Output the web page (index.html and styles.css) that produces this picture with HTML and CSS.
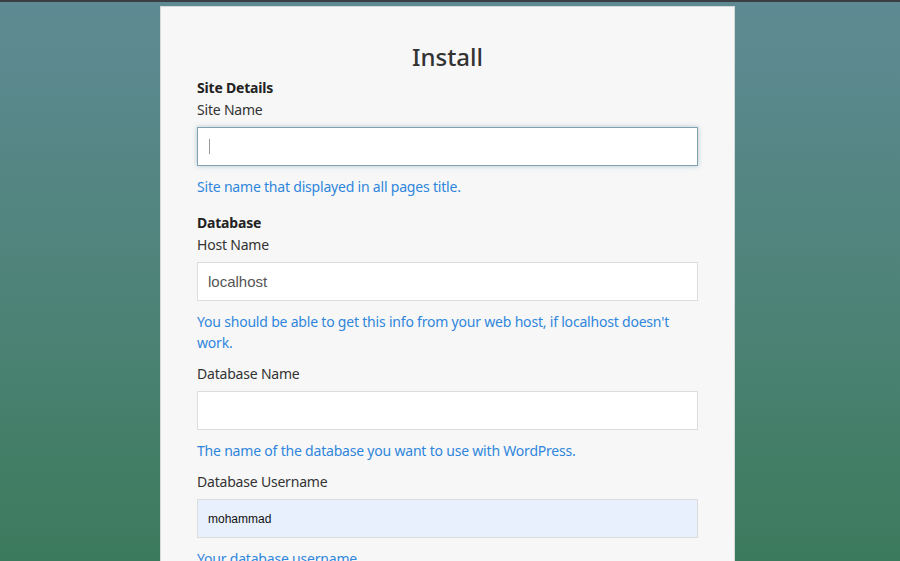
FILE: index.html
```html
<!DOCTYPE html>
<html>
<head>
  <title>Install</title>
  <meta charset="utf-8">
  <meta name="viewport" content="width=device-width, initial-scale=1.0">
  <link rel="stylesheet" href="styles.css">
</head>
<body>
  <div class="topbar"></div>
  <div class="page">
    <div class="card">
      <h1>Install</h1>

      <div class="section-title">Site Details</div>
      <div class="form-group">
        <label class="label" for="siteName">Site Name</label>
        <div class="input-wrap">
          <input type="text" id="siteName" class="input focused" value="">
          <span class="caret"></span>
        </div>
        <div class="help">Site name that displayed in all pages title.</div>
      </div>

      <div class="section-title spaced">Database</div>
      <div class="form-group">
        <label class="label" for="hostName">Host Name</label>
        <input type="text" id="hostName" class="input" value="localhost">
        <div class="help">You should be able to get this info from your web host, if localhost doesn't work.</div>
      </div>

      <div class="form-group">
        <label class="label" for="dbName">Database Name</label>
        <input type="text" id="dbName" class="input" value="">
        <div class="help">The name of the database you want to use with WordPress.</div>
      </div>

      <div class="form-group">
        <label class="label" for="dbUser">Database Username</label>
        <input type="text" id="dbUser" class="input autofill" value="mohammad">
        <div class="help">Your database username.</div>
      </div>

      <div class="form-group">
        <label class="label" for="dbPass">Database Password</label>
        <input type="password" id="dbPass" class="input" value="">
        <div class="help">Your database password.</div>
      </div>
    </div>
  </div>
</body>
</html>
```

FILE: styles.css
```css
html, body {
  height: 100%;
}
body {
  margin: 0;
  font-family: "Noto Sans", "Open Sans", Arial, sans-serif;
  font-size: 14px;
  letter-spacing: -0.2px;
  color: #333;
  background: linear-gradient(to bottom, #5f8a94 0%, #4b8274 60%, #3c7a5c 100%);
  overflow: hidden;
}
.topbar {
  height: 2px;
  background-color: #3b3f44;
}
.page {
  padding: 4px 5px 0 0;
}
.card {
  width: 501px;
  margin: 0 auto;
  padding: 34px 36px 40px 36px;
  background-color: #f7f7f7;
  border: 1px solid #d4d9da;
  border-bottom: none;
  min-height: 600px;
}
h1 {
  margin: 0 0 5px 0;
  text-align: center;
  font-size: 24px;
  font-weight: 500;
  line-height: 31px;
  letter-spacing: 0;
  color: #333;
}
.section-title {
  font-weight: bold;
  line-height: 21px;
  color: #222;
}
.section-title.spaced {
  margin-top: 15px;
}
.form-group {
  margin-bottom: 10px;
}
.label {
  display: block;
  line-height: 21px;
  margin-bottom: 7px;
  color: #333;
}
.section-title + .form-group .label {
  margin-top: 1px;
}
.input-wrap {
  position: relative;
}
.input {
  display: block;
  box-sizing: border-box;
  width: 100%;
  height: 39px;
  padding: 0 10px;
  border: 1px solid #dcdcdc;
  background-color: #fff;
  font-family: "Liberation Sans", Arial, sans-serif;
  font-size: 15px;
  letter-spacing: 0;
  color: #555;
  outline: none;
}
.input.focused {
  border-color: #7fa3b2;
  box-shadow: 0 0 5px rgba(95, 138, 160, 0.45);
}
.input.autofill {
  background-color: #e8f0fe;
  font-size: 12px;
  color: #111;
}
.caret {
  position: absolute;
  left: 12px;
  top: 12px;
  width: 1px;
  height: 15px;
  background-color: #999;
}
.help {
  margin-top: 10px;
  line-height: 21px;
  color: #2f86dc;
}
```
